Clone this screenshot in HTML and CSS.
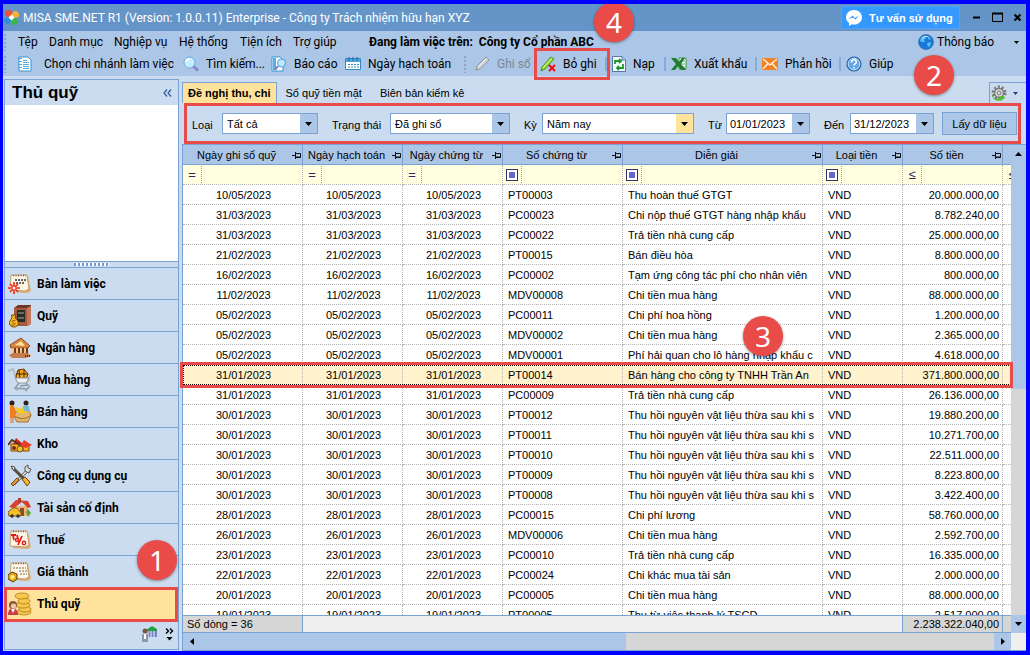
FILE: index.html
```
<!DOCTYPE html>
<html lang="vi">
<head>
<meta charset="utf-8">
<title>MISA SME.NET R1</title>
<link rel="stylesheet" href="styles.css">
</head>
<body>
<svg class="defs" aria-hidden="true">
  <symbol id="pin" viewBox="0 0 9 9"><path d="M0 4.500H3M3.500 1V8M3.500 2.500H8.500V6.500H3.500" fill="none" stroke="#111"/><path d="M3.500 6H8.500" stroke="#111"/></symbol>
  <symbol id="down" viewBox="0 0 7 4"><path d="M0 0H7L3.500 4Z" fill="#000"/></symbol>
  <symbol id="sheet" viewBox="0 0 24 24"><path d="M6 3 20 4 23 19 20 21 5 20Z" fill="#d8ae74"/><path d="M3 3 19 3 21 17 17 19 2 18Z" fill="#fdf6e6" stroke="#b98d58" stroke-width=".8"/><path d="M5 3.500H18" stroke="#7b5836" stroke-width="1.500" stroke-dasharray="1 1.500"/></symbol>
</svg>
<div class="window">
  <header class="titlebar">
    <svg class="logo" width="15" height="15" viewBox="0 0 15 15"><path d="M7 7C0 8-1 2 4 0c3-1 5 2 3 7Z" fill="#ef4c3a"/><path d="M8 7c-1-7 5-8 7-3 1 3-2 5-7 3Z" fill="#f9b233"/><path d="M8 8c7-1 8 5 3 7-3 1-5-2-3-7Z" fill="#39b54a"/><path d="M7 8c1 7-5 8-7 3-1-3 2-5 7-3Z" fill="#2a8fe0"/><path d="M7.500 4.500 10.500 7.500 7.500 10.500 4.500 7.500Z" fill="#fff"/></svg>
    <h1 class="title">MISA SME.NET R1 (Version: 1.0.0.11) Enterprise - Công ty Trách nhiệm hữu hạn XYZ</h1>
    <button class="support"><svg width="16" height="16" viewBox="0 0 16 16"><path d="M8 0C3.500 0 0 3.200 0 7.200c0 2.400 1.200 4.300 3 5.600V16l3-1.700c5 1.300 10-2 10-7C16 3.200 12.500 0 8 0Z" fill="#fff"/><path d="M3 9 6.500 5.500 9 8 13 5.500 9.500 9.500 7 7.500Z" fill="#3497fb"/></svg>Tư vấn sử dụng</button>
    <div class="winbtns">
      <button aria-label="Thu nhỏ"><svg width="11" height="11" viewBox="0 0 11 11"><path d="M2 5.500H9" stroke="#000" stroke-width="2"/></svg></button>
      <button aria-label="Phóng to"><svg width="11" height="11" viewBox="0 0 11 11"><path d="M.5 1V9.500H10.500V1" fill="none" stroke="#000"/><path d="M0 1.500H11" stroke="#000" stroke-width="2"/></svg></button>
      <button aria-label="Đóng"><svg width="9" height="9" viewBox="0 0 9 9"><path d="M1.500 1.500 7.500 7.500M7.500 1.500 1.500 7.500" stroke="#000" stroke-width="2"/></svg></button>
    </div>
  </header>
  <div class="bars">
    <nav class="menubar">
      <span class="grip"></span>
      <button>Tệp</button><button>Danh mục</button><button>Nghiệp vụ</button><button>Hệ thống</button><button>Tiện ích</button><button>Trợ giúp</button>
      <strong class="working">Đang làm việc trên:&nbsp; Công ty Cổ phần ABC</strong>
      <button class="notice"><svg width="16" height="16" viewBox="0 0 16 16"><circle cx="8" cy="8" r="7.500" fill="#1878d8" stroke="#2b62a3" stroke-width=".6"/><path d="M3 4 7 2 8 4 6 6 7 8 4 8 2 7ZM9 9 13 8 12 12 10 13ZM10 3 13 5 11 6Z" fill="#5cc0f2"/><path d="M3 5C5 1 10 1 12 4 9 2 5 3 3 5Z" fill="#fff" opacity=".7"/></svg>Thông báo<svg class="notice-arrow" width="5" height="3"><use href="#down"/></svg></button>
    </nav>
    <div class="toolbar">
      <span class="grip"></span>
      <button><svg width="16" height="16" viewBox="0 0 16 16"><path d="M2 1H11L14 4V15H2Z" fill="#fff" stroke="#3a95d4"/><path d="M1 2.500H5M1 5.500H5M1 8.500H5M1 11.500H5M6 4.500H10M6 6.500H12M6 8.500H12M6 10.500H12M6 12.500H12" stroke="#55abe0"/></svg>Chọn chi nhánh làm việc</button>
      <button><svg width="16" height="16" viewBox="0 0 16 16"><path d="M10 10 15 14.500" stroke="#8a84cf" stroke-width="3"/><circle cx="6.500" cy="6.500" r="5.500" fill="#c7ecfc" stroke="#68add8"/><path d="M3 6C3 4 5 3 7 3" stroke="#fff" stroke-width="1.500" fill="none"/></svg>Tìm kiếm...</button>
      <button><svg width="16" height="16" viewBox="0 0 16 16"><path d="M1 1H9L12 4V15H1Z" fill="#fff" stroke="#3a95d4"/><path d="M2 2H5V14H2Z" fill="#58aee3"/><path d="M7 10 4 14" stroke="#807bc8" stroke-width="2"/><circle cx="10.500" cy="7" r="4" fill="#bfe8fa" stroke="#4e9fd2"/></svg>Báo cáo</button>
      <button><svg width="16" height="16" viewBox="0 0 16 16"><path d="M.5 2.500H15.500V13.500H.5Z" fill="#fff" stroke="#3287c5"/><path d="M1 3H15V6H1Z" fill="#4ea6db"/><path d="M4 1V5M8 1V5M12 1V5" stroke="#22649a"/><path d="M3 8.500H14M3 11H14" stroke="#3287c5" stroke-dasharray="2 1"/></svg>Ngày hạch toán</button>
      <span class="grip"></span>
      <button disabled><svg width="16" height="16" viewBox="0 0 16 16"><path d="M2 14 3 10 12 1 15 4 6 13Z" fill="#cfd3d8" stroke="#8d9298"/><path d="M4 11 13 2" stroke="#f2f2f2"/></svg>Ghi sổ</button>
      <button class="unpost"><svg width="16" height="16" viewBox="0 0 16 16"><path d="M1 15 2 11 11 1 14 3 5 13Z" fill="#8edb35" stroke="#4d9417"/><path d="M3 12 12 2" stroke="#dcf9a4"/><path d="M9 9 15 15M15 9 9 15" stroke="#f20d0d" stroke-width="2"/></svg>Bỏ ghi</button>
      <button><svg width="14" height="16" viewBox="0 0 14 16"><path d="M.5.500H10L13.500 4V15.500H.5Z" fill="#f4f8ff" stroke="#5577a8"/><path d="M10 .5V4H13.500" fill="#b9cbe8" stroke="#5577a8"/><path d="M3 8V5H8M7 3 9 5 7 7M11 8V12H6M7 14 5 12 7 10" fill="none" stroke="#189b25" stroke-width="1.800"/></svg>Nạp</button>
      <button><svg width="16" height="16" viewBox="0 0 16 16"><path d="M8 2H15V13H8Z" fill="#fff" stroke="#3f8f40"/><path d="M9 5H14M9 8H14M9 11H14" stroke="#61ad5d"/><path d="M0 2H5L8 6 11 2H14L10 8 15 14H10L7 10 4 14H0L5 8Z" fill="#1e7d2c"/></svg>Xuất khẩu</button>
      <button><svg width="16" height="12" viewBox="0 0 16 12"><path d="M0 0H16V12H0Z" fill="#f58220"/><path d="M1 1 8 7 15 1M1 11 6 5.500M15 11 10 5.500" fill="none" stroke="#fff" stroke-width="1.200"/></svg>Phản hồi</button>
      <button><svg width="16" height="16" viewBox="0 0 16 16"><circle cx="8" cy="8" r="7" fill="#5fa6e8" stroke="#235fa8" stroke-width="1.200"/><circle cx="8" cy="8" r="5.800" fill="none" stroke="#d9ecfb" stroke-width=".8"/><path d="M5.500 6.500C5.500 3 10.500 3 10.500 6 10.500 8 8 7.500 8 9.500M8 11V12.500" fill="none" stroke="#fff" stroke-width="1.600"/></svg>Giúp</button>
    </div>
  </div>
  <div class="content">
    <aside class="sidebar">
      <div class="side-head"><h2>Thủ quỹ</h2><button class="collapse" aria-label="Thu gọn"><svg width="9" height="8" viewBox="0 0 9 8"><path d="M4 .5 1 4 4 7.500M8 .5 5 4 8 7.500" fill="none" stroke="#2b5b9c" stroke-width="1.200"/></svg></button></div>
      <div class="side-blank"></div>
      <div class="splitter"><span></span></div>
      <nav class="side-nav">
        <a href="#ban"><svg viewBox="0 0 24 24"><use href="#sheet"/><path d="M7 8H18M8 11H16" stroke="#333" stroke-width="1.500" stroke-dasharray="2 1"/><circle cx="6" cy="16" r="4" fill="#fff1c0"/><path d="M6 10V22M0 16H12M2 12 10 20M10 12 2 20" stroke="#ed2b1d" stroke-width="1.700"/><circle cx="6" cy="16" r="1.500" fill="#fff"/></svg>Bàn làm việc</a>
        <a href="#quy"><svg viewBox="0 0 24 24"><path d="M6 4 10 1H23V20L19 22H6Z" fill="#6f3626"/><path d="M6 4H19V22H6Z" fill="#a65c3c"/><path d="M9 6H17V18H9Z" fill="#292b27"/><path d="M10 9H16M10 14H16" stroke="#a3b394"/><path d="M19 4 23 2V20L19 22Z" fill="#c5785b"/><path d="M3.500 11H8L7 14C12 17 11 23 6 23S0 18 4 14Z" fill="#f8bb20" stroke="#77470d"/><path d="M7.500 16.500C3 15.500 4 19 6 19S7 22 3.500 21" fill="none" stroke="#8f4d0c"/></svg>Quỹ</a>
        <a href="#nganhang"><svg viewBox="0 0 24 24"><path d="M2 9 13 2 22 10 20 12 3 12Z" fill="#dc853d" stroke="#904f22"/><path d="M7 9 13 5 17 10Z" fill="#fce2a0"/><path d="M4 12H20V19H4Z" fill="#6f3820"/><path d="M5 12V19M9 12V20M13 12V20M17 12V19" stroke="#f3c286" stroke-width="2"/><path d="M1 19 5 17H20L23 20 18 22H4Z" fill="#c47c4b"/><path d="M17 20H23" stroke="#4b3020" stroke-width="2" stroke-dasharray="1 1"/></svg>Ngân hàng</a>
        <a href="#muahang"><svg viewBox="0 0 24 24"><path d="M0 3 5 1 9 13H20L22 7" fill="none" stroke="#b2bac4" stroke-width="2"/><path d="M8 8 10 2 16 1 20 6 18 12H9Z" fill="#f3a719" stroke="#5f3410"/><path d="M11 2 12 11M16 2V11M8 6H20" stroke="#48250a"/><path d="M7 10H21L18 15H10Z" fill="#eef1f3" stroke="#8d98a5"/><path d="M11 15 7 20 19 21 22 18M18 15 20 17 12 18" fill="none" stroke="#8d98a5" stroke-width="1.500"/><circle cx="9" cy="21" r="1.500" fill="#aaa"/><circle cx="18" cy="22" r="1.500" fill="#aaa"/></svg>Mua hàng</a>
        <a href="#banhang"><svg viewBox="0 0 24 24"><path d="M6 16 8 12C12 7 22 9 23 15L20 22H9Z" fill="#e3b56f" stroke="#a6712f"/><path d="M7 16C12 20 19 19 23 15" fill="none" stroke="#9a672b"/><path d="M9 13 8 7 13 9 15 6 19 13Z" fill="#f7c91b"/><circle cx="4" cy="3" r="2.500" fill="#302015"/><path d="M2 5 6 6 8 11 6 18H2Z" fill="#f07c20"/><path d="M3 18V23M5 18V23" stroke="#dc6b38"/><circle cx="18" cy="3" r="2.500" fill="#302015"/><path d="M15 6H21L22 11H16Z" fill="#72b9d6"/></svg>Bán hàng</a>
        <a href="#kho"><svg viewBox="0 0 24 24"><path d="M5 12 8 6 15 12 14 18H7Z" fill="#c5281d"/><path d="M3 12H11V19H3Z" fill="#f7b12c" stroke="#86430e"/><path d="M0 13 4 8 12 13" fill="none" stroke="#63311b" stroke-width="2"/><path d="M15 13H21V19H15Z" fill="#f7b12c" stroke="#86430e"/><path d="M12 14 16 8 24 13 18 16Z" fill="#e74025"/><circle cx="6" cy="16" r="2" fill="#6e3310"/><circle cx="12" cy="17" r="3" fill="#f1c034" stroke="#79500b"/></svg>Kho</a>
        <a href="#congcu"><svg viewBox="0 0 24 24"><path d="M6 20 20 6" stroke="#555" stroke-width="3"/><path d="M6 20 19 7" stroke="#e7e7e7" stroke-width="1.500"/><path d="M17 7V3L20 1V4L23 5 21 9Z" fill="#ddd" stroke="#555"/><path d="M3 20 9 14 11 16 5 22Z" fill="#e99a2b" stroke="#6b4522"/><path d="M4 3 17 16" stroke="#594b3b" stroke-width="3"/><path d="M3 2 7 3 6 7Z" fill="#eee" stroke="#555"/><path d="M14 15 17 13 22 18 19 22Z" fill="#f2b32e" stroke="#6b4522"/></svg>Công cụ dụng cụ</a>
        <a href="#taisan"><svg viewBox="0 0 24 24"><path d="M5 10H20V20H5Z" fill="#e9b57a"/><path d="M1 11 8 4 20 5 23 11 20 12 14 6 6 12Z" fill="#d9402d"/><path d="M10 2H13V6H10Z" fill="#b33828"/><path d="M12 12H16V20H12Z" fill="#8c4b28"/><path d="M0 16 5 12H9L13 17V20H1Z" fill="#f4c228" stroke="#8c5b12"/><circle cx="4" cy="20" r="1.800" fill="#333"/><circle cx="10" cy="20" r="1.800" fill="#333"/><path d="M18 16 20 13 23 17 20 21Z" fill="#61a13a"/></svg>Tài sản cố định</a>
        <a href="#thue"><svg viewBox="0 0 24 24"><use href="#sheet"/><path d="M3 7H8M5 7 6 12M9 7 10 11M14 8 10 17" stroke="#e01c17" stroke-width="1.800"/><circle cx="9" cy="12" r="1.500" fill="none" stroke="#e01c17" stroke-width="1.400"/><circle cx="16" cy="15" r="1.700" fill="none" stroke="#e01c17" stroke-width="1.400"/></svg>Thuế</a>
        <a href="#giathanh"><svg viewBox="0 0 24 24"><use href="#sheet"/><path d="M5 8H18M11 11H19M12 14H19" stroke="#806650" stroke-dasharray="2 1"/><path d="M0 15 4 12 9 14V19L5 22 0 19Z" fill="#e8a915" stroke="#593b0c"/><circle cx="4.500" cy="17" r="2" fill="#fff099"/></svg>Giá thành</a>
        <a href="#thuquy" class="current" aria-current="page"><svg viewBox="0 0 24 24"><g fill="#f7c64e" stroke="#b17a15" stroke-width=".8"><ellipse cx="16" cy="20" rx="7" ry="3"/><ellipse cx="17" cy="17" rx="6" ry="3"/><ellipse cx="15" cy="13" rx="7" ry="3"/><ellipse cx="16" cy="9" rx="6" ry="3"/><ellipse cx="14" cy="4" rx="7" ry="3"/></g><path d="M0 23C0 17 3 16 5 16S10 18 10 23Z" fill="#c73d48"/><path d="M3 17 5 21 7 17Z" fill="#fff"/><circle cx="5" cy="13" r="4" fill="#8a5538"/><circle cx="5.500" cy="14" r="2.600" fill="#f2c7a3"/></svg>Thủ quỹ</a>
      </nav>
      <div class="side-foot">
        <button aria-label="Kho bạc"><svg width="17" height="17" viewBox="0 0 17 17"><path d="M5 4 11 0 16 3V5H5Z" fill="#23a044"/><path d="M6 5H16V11H6Z" fill="#7683c4"/><path d="M7 5V11M10 5V11M13 5V11" stroke="#e7ecff"/><circle cx="4" cy="5" r="2.500" fill="#7a583f"/><path d="M1 8H7V16H1Z" fill="#8c9aa6"/><path d="M3 8H5V13H3Z" fill="#fff"/></svg></button>
        <button aria-label="Thêm"><svg width="9" height="13" viewBox="0 0 9 13"><path d="M1 .5 3.500 3 1 5.500M5 .5 7.500 3 5 5.500" fill="none" stroke="#000" stroke-width="1.400"/><path d="M1.500 9H7.500L4.500 12.500Z"/></svg></button>
      </div>
    </aside>
    <main class="main">
      <div class="tabs">
        <button class="tab active">Đề nghị thu, chi</button><button class="tab">Sổ quỹ tiền mặt</button><button class="tab">Biên bản kiểm kê</button>
        <button class="settings" aria-label="Thiết lập"><svg width="17" height="17" viewBox="0 0 17 17"><circle cx="8" cy="8" r="6" fill="none" stroke="#777" stroke-width="3" stroke-dasharray="2 1.770"/><circle cx="8" cy="8" r="4.500" fill="#e2e2dc" stroke="#777" stroke-width="1.500"/><circle cx="8" cy="8" r="2" fill="#cbdcf0" stroke="#777"/><path d="M1 9C2 14 6 15 9 13L8 11 14 12 10 16 9.500 15C5 17 1 14 1 9Z" fill="#4fc51e"/></svg><svg width="5" height="3" viewBox="0 0 5 3"><path d="M0 0H5L2.500 3Z" fill="#173e83"/></svg></button>
      </div>
      <form class="filters">
        <label for="loai">Loại</label><span class="combo"><select id="loai"><option>Tất cả</option></select><i><svg><use href="#down"/></svg></i></span>
        <label for="tt">Trạng thái</label><span class="combo"><select id="tt"><option>Đã ghi sổ</option></select><i><svg><use href="#down"/></svg></i></span>
        <label for="ky">Kỳ</label><span class="combo hot"><select id="ky"><option>Năm nay</option></select><i><svg><use href="#down"/></svg></i></span>
        <label for="tu">Từ</label><span class="combo date"><input id="tu" type="text" value="01/01/2023"><i><svg><use href="#down"/></svg></i></span>
        <label for="den">Đến</label><span class="combo date"><input id="den" type="text" value="31/12/2023"><i><svg><use href="#down"/></svg></i></span>
        <button type="button" class="load">Lấy dữ liệu</button>
      </form>
      <div class="grid">
        <div class="rows">
          <table>
            <colgroup><col class="c-first"><col class="c-date"><col class="c-date"><col class="c-no"><col><col class="c-cur"><col class="c-date"><col class="c-rest"></colgroup>
            <thead>
              <tr><th><div>Ngày ghi sổ quỹ<svg><use href="#pin"/></svg></div><th><div>Ngày hạch toán<svg><use href="#pin"/></svg></div><th><div>Ngày chứng từ<svg><use href="#pin"/></svg></div><th><div>Số chứng từ<svg><use href="#pin"/></svg></div><th><div>Diễn giải<svg><use href="#pin"/></svg></div><th><div>Loại tiền<svg><use href="#pin"/></svg></div><th><div>Số tiền<svg><use href="#pin"/></svg></div><th></tr>
              <tr class="cond"><td><span>=</span><td><span>=</span><td><span>=</span><td><span><b></b></span><td><span><b></b></span><td><span><b></b></span><td><span>≤</span><td><span>≤</span></tr>
            </thead>
            <tbody>
              <tr><td>10/05/2023<td>10/05/2023<td>10/05/2023<td>PT00003<td>Thu hoàn thuế GTGT<td>VND<td>20.000.000,00<td></tr>
              <tr><td>31/03/2023<td>31/03/2023<td>31/03/2023<td>PC00023<td>Chi nộp thuế GTGT hàng nhập khẩu<td>VND<td>8.782.240,00<td></tr>
              <tr><td>31/03/2023<td>31/03/2023<td>31/03/2023<td>PC00022<td>Trả tiền nhà cung cấp<td>VND<td>25.000.000,00<td></tr>
              <tr><td>21/02/2023<td>21/02/2023<td>21/02/2023<td>PT00015<td>Bán điều hòa<td>VND<td>8.800.000,00<td></tr>
              <tr><td>16/02/2023<td>16/02/2023<td>16/02/2023<td>PC00002<td>Tạm ứng công tác phí cho nhân viên<td>VND<td>800.000,00<td></tr>
              <tr><td>11/02/2023<td>11/02/2023<td>11/02/2023<td>MDV00008<td>Chi tiền mua hàng<td>VND<td>88.000.000,00<td></tr>
              <tr><td>05/02/2023<td>05/02/2023<td>05/02/2023<td>PC00011<td>Chi phí hoa hồng<td>VND<td>1.200.000,00<td></tr>
              <tr><td>05/02/2023<td>05/02/2023<td>05/02/2023<td>MDV00002<td>Chi tiền mua hàng<td>VND<td>2.365.000,00<td></tr>
              <tr><td>05/02/2023<td>05/02/2023<td>05/02/2023<td>MDV00001<td>Phí hải quan cho lô hàng nhập khẩu c<td>VND<td>4.618.000,00<td></tr>
              <tr class="selected"><td>31/01/2023<td>31/01/2023<td>31/01/2023<td>PT00014<td>Bán hàng cho công ty TNHH Trần An<td>VND<td>371.800.000,00<td></tr>
              <tr><td>31/01/2023<td>31/01/2023<td>31/01/2023<td>PC00009<td>Trả tiền nhà cung cấp<td>VND<td>26.136.000,00<td></tr>
              <tr><td>30/01/2023<td>30/01/2023<td>30/01/2023<td>PT00012<td>Thu hồi nguyên vật liệu thừa sau khi s<td>VND<td>19.880.200,00<td></tr>
              <tr><td>30/01/2023<td>30/01/2023<td>30/01/2023<td>PT00011<td>Thu hồi nguyên vật liệu thừa sau khi s<td>VND<td>10.271.700,00<td></tr>
              <tr><td>30/01/2023<td>30/01/2023<td>30/01/2023<td>PT00010<td>Thu hồi nguyên vật liệu thừa sau khi s<td>VND<td>22.511.000,00<td></tr>
              <tr><td>30/01/2023<td>30/01/2023<td>30/01/2023<td>PT00009<td>Thu hồi nguyên vật liệu thừa sau khi s<td>VND<td>8.223.800,00<td></tr>
              <tr><td>30/01/2023<td>30/01/2023<td>30/01/2023<td>PT00008<td>Thu hồi nguyên vật liệu thừa sau khi s<td>VND<td>3.422.400,00<td></tr>
              <tr><td>28/01/2023<td>28/01/2023<td>28/01/2023<td>PC00015<td>Chi phí lương<td>VND<td>58.760.000,00<td></tr>
              <tr><td>26/01/2023<td>26/01/2023<td>26/01/2023<td>MDV00006<td>Chi tiền mua hàng<td>VND<td>2.592.700,00<td></tr>
              <tr><td>23/01/2023<td>23/01/2023<td>23/01/2023<td>PC00010<td>Trả tiền nhà cung cấp<td>VND<td>16.335.000,00<td></tr>
              <tr><td>22/01/2023<td>22/01/2023<td>22/01/2023<td>PC00024<td>Chi khác mua tài sản<td>VND<td>2.000.000,00<td></tr>
              <tr><td>20/01/2023<td>20/01/2023<td>20/01/2023<td>PC00005<td>Chi tiền mua hàng<td>VND<td>88.000.000,00<td></tr>
              <tr><td>19/01/2023<td>19/01/2023<td>19/01/2023<td>PT00005<td>Thu từ việc thanh lý TSCĐ<td>VND<td>2.517.000,00<td></tr>
            </tbody>
          </table>
        </div>
        <div class="summary"><span class="count">Số dòng = 36</span><span class="total">2.238.322.040,00</span><span class="count-rest"></span></div>
        <div class="vscroll"><button aria-label="Lên"><svg width="7" height="4" viewBox="0 0 7 4"><path d="M0 4H7L3.500 0Z"/></svg></button><span class="thumb"></span><span class="track"></span><button class="dn" aria-label="Xuống"><svg width="7" height="4"><use href="#down"/></svg></button></div>
        <div class="hscroll"><button aria-label="Trái"><svg width="4" height="7" viewBox="0 0 4 7"><path d="M4 0V7L0 3.500Z"/></svg></button><span class="thumb"></span><span class="track"></span><button aria-label="Phải"><svg width="4" height="7" viewBox="0 0 4 7"><path d="M0 0V7L4 3.500Z"/></svg></button></div>
        <div class="corner"></div>
      </div>
    </main>
  </div>
  <span class="frame frame-unpost"></span><span class="frame frame-nav"></span><span class="frame frame-row"></span>
  <span class="step step-1">1</span><span class="step step-2">2</span><span class="step step-3">3</span><span class="step step-4">4</span>
</div>
</body>
</html>
```
FILE: styles.css
```
:root {
  --line: #7aa2d2;
  --bar: #abc6e6;
  --pale: #cbdcf0;
  --gold: #ffe39c;
  --red: #e94b48;
  --ui: Roboto, "Noto Sans", sans-serif;
  --grid: "Liberation Sans", Arial, sans-serif;
}
* { box-sizing: border-box; }
body {
  margin: 0;
  height: 100vh;
  border: 4px solid #00f;
  border-left-width: 3px;
  font: 11px/14px var(--grid);
  color: #000;
  overflow: hidden;
}
button { font: inherit; color: inherit; background: none; border: 0; padding: 0; margin: 0; white-space: nowrap; }
svg { flex: none; display: block; }
.defs { position: absolute; width: 0; height: 0; }
.window { position: relative; height: 100%; display: flex; flex-direction: column; overflow: hidden; background: var(--pale); }

.titlebar { flex: none; height: 27px; display: flex; align-items: center; background: #6595c8; padding-right: 4px; }
.logo { margin-left: 1px; }
.title { flex: 1; margin: 0 0 0 4px; font: 400 12px/16px var(--ui); color: #fff; white-space: nowrap; }
.support { display: flex; align-items: center; gap: 7px; width: 119px; height: 23px; padding-left: 4px; background: #3598fc; border: 1px solid #4ea4fa; color: #fff; font-weight: 700; }
.winbtns { display: flex; align-items: center; gap: 10px; margin-left: 11px; }

.bars { flex: none; height: 45px; background: var(--bar); font: 12px/18px var(--ui); }
.menubar, .toolbar { display: grid; align-items: center; height: 22px; }
.menubar { grid-template-columns: 15px 31px 65px 65px 61px 53px 76px 1fr 108px; }
.toolbar { grid-template-columns: 14px 166px 88px 74px 118px 11px 66px 65px 59px 91px 84px 1fr; }
.bars button { display: flex; align-items: center; gap: 7px; text-align: left; }
.toolbar button:nth-child(2) { gap: 11px; }
.toolbar button:disabled { color: #7c8795; }
.toolbar button:nth-child(n+9) { border-left: 2px solid #84acdb; height: 14px; padding-left: 5px; }
.grip { width: 4px; height: 18px; background: radial-gradient(circle, #8ba5c7 1px, transparent 1px) 0 0 / 4px 4px; }
.bars .notice { gap: 3px; }
.bars .notice .notice-arrow { margin-left: 17px; }

.content { flex: 1; min-height: 0; display: flex; gap: 3px; }
.sidebar { flex: none; width: 175px; margin: 3px 0 1px 1px; border: 1px solid var(--line); display: flex; flex-direction: column; }
.side-head { height: 25px; flex: none; display: flex; align-items: center; justify-content: space-between; padding: 0 6px 0 7px; }
.side-head h2 { margin: 0; font: 700 17px/24px var(--grid); }
.side-blank { flex: 1; background: #fff; border-bottom: 1px solid var(--line); }
.splitter { height: 6px; flex: none; display: flex; justify-content: center; align-items: center; border-bottom: 1px solid var(--line); }
.splitter span { width: 35px; height: 3px; background: repeating-linear-gradient(90deg, #6f9bd2 0 2px, #fff 2px 4px); }
.side-nav a { display: flex; align-items: center; gap: 5px; height: 32px; padding-left: 3px; border-bottom: 1px solid var(--line); font: 700 12px/16px var(--ui); color: #000; text-decoration: none; }
.side-nav svg { width: 24px; height: 24px; }
.side-nav .current { background: var(--gold); }
.side-foot { flex: none; height: 29px; display: flex; justify-content: flex-end; align-items: center; gap: 7px; padding-right: 4px; }

.main { flex: 1; min-width: 0; display: flex; flex-direction: column; padding-top: 6px; }
.tabs { flex: none; height: 21px; display: flex; }
.tab { padding: 0 9px; font-size: 11px; }
.tab.active { background: var(--gold); border: 1px solid var(--line); border-bottom: 0; font-weight: 700; padding: 0 5px; }
.settings { margin-left: auto; width: 37px; display: flex; align-items: center; justify-content: space-between; padding: 0 8px 0 1px; border: 1px solid var(--line); border-right: 0; border-bottom: 0; }
.filters { flex: none; height: 41px; margin: 0 5px 0 2px; padding: 0 1px 0 5px; border: 3px solid var(--red); display: grid; align-items: center; grid-template-columns: 30px 96fr 72px 120fr 32px 152fr 32px 84fr 40px 84fr 83px; }
.filters label { padding: 3px 0 0 14px; }
.filters label:first-child { padding-left: 0; }
.combo { height: 21px; display: flex; border: 1px solid var(--line); background: #fff; min-width: 0; }
.combo select, .combo input { flex: 1; min-width: 0; width: 0; font: inherit; color: #000; border: 0; padding: 0 0 0 4px; background: none; appearance: none; outline: 0; }
.combo.date input { padding-left: 3px; }
.combo i { width: 17px; flex: none; background: var(--bar); display: flex; align-items: center; justify-content: center; }
.combo i svg { width: 7px; height: 4px; }
.combo.hot i { background: var(--gold); }
.load { height: 23px; margin-left: 8px; background: var(--bar); border: 1px solid var(--line); }

.grid { flex: 1; min-height: 0; display: grid; grid-template: minmax(0, 1fr) 18px 18px / minmax(0, 1fr) 15px; border: solid var(--line); border-width: 1px 0 0 1px; }
.rows { overflow: hidden; background: #fff; }
table { width: 100%; table-layout: fixed; border-collapse: separate; border-spacing: 0; }
.c-first { width: 120px; }
.c-date { width: 100px; }
.c-no { width: 120px; }
.c-cur { width: 80px; }
.c-rest { width: 8px; }
th { height: 20px; padding: 0; background: var(--bar); border-right: 1px solid var(--line); border-bottom: 1px solid var(--line); font-weight: 400; }
th:last-child { border-right: 0; }
th div { position: relative; padding-right: 12px; text-align: center; white-space: nowrap; }
th svg { position: absolute; right: 1px; top: 3px; width: 9px; height: 9px; }
td { height: 20px; padding: 0 3px 0 5px; border-right: 1px dotted #b4b4b4; border-bottom: 1px dotted #b4b4b4; white-space: nowrap; overflow: hidden; }
td:last-child { border-right: 0; }
tbody td:nth-child(-n+3) { text-align: center; }
tbody td:nth-child(7) { text-align: right; }
.cond td { background: #ffffdf; padding: 0; }
.cond span { display: flex; align-items: center; justify-content: center; width: 19px; height: 17px; border-right: 1px dotted #999; font-size: 13px; color: #26265e; }
.cond b { width: 12px; height: 12px; border: 1px solid #33336e; background: #6666d0; box-shadow: inset 0 0 0 2px #fff; }
.selected td { background: #fff2cc; }
.selected { outline: 1px dotted #000; outline-offset: -1px; }
.summary { grid-area: 2 / 1; display: flex; background: #efefef; border: solid var(--line); border-width: 1px 0; line-height: 16px; }
.count { width: 120px; padding-left: 4px; background: #d6d6d6; border-right: 1px solid var(--line); }
.total { margin-left: auto; width: 101px; padding-right: 3px; text-align: right; background: #d6d6d6; border: solid var(--line); border-width: 0 1px; }
.count-rest { width: 8px; background: #d6d6d6; }
.vscroll { grid-area: 1 / 2 / 3 / 3; display: flex; flex-direction: column; background: #d6d6d6; }
.vscroll button { height: 18px; background: var(--bar); display: flex; align-items: center; justify-content: center; }
.vscroll .thumb { flex: 226; background: var(--bar); }
.vscroll .track { flex: 227; }
.hscroll { grid-area: 3 / 1; display: flex; background: #d6d6d6; border-bottom: 1px solid var(--line); }
.hscroll button { width: 17px; background: var(--bar); display: flex; align-items: center; justify-content: center; }
.hscroll .thumb { flex: 426; background: var(--bar); }
.hscroll .track { flex: 368; }
.corner { grid-area: 3 / 2; background: #efefef; border-bottom: 1px solid var(--line); }

.frame { position: absolute; border: 3px solid var(--red); pointer-events: none; }
.frame-unpost { left: 531px; top: 44px; width: 76px; height: 32px; }
.frame-nav { left: 1px; bottom: 29px; width: 174px; height: 35px; }
.frame-row { left: 177px; right: 13px; top: 358px; height: 26px; }
.step { position: absolute; width: 40px; height: 40px; border-radius: 50%; background: var(--red); color: #fff; font: 28px/40px "Noto Sans", sans-serif; text-align: center; box-shadow: 0 1px 3px #0006; }
.step-1 { left: 134px; top: 536px; }
.step-2 { left: 911px; top: 51px; }
.step-3 { left: 740px; top: 312px; }
.step-4 { left: 591px; top: -2px; }
```
